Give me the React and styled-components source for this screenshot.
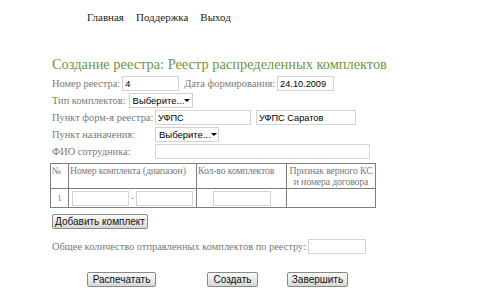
import React from 'react';
import styled, { createGlobalStyle } from 'styled-components';

const GlobalStyle = createGlobalStyle`
  html, body {
    margin: 0;
    padding: 0;
    background: #ffffff;
  }
  body {
    font-family: "Liberation Serif", "DejaVu Serif", serif;
  }
`;

const Page = styled.div`
  width: 500px;
  height: 302px;
  overflow: hidden;
  background: #fff;
`;

const Nav = styled.div`
  display: flex;
  gap: 12px;
  padding: 11px 0 0 87px;
  height: 20px;
  font-size: 11px;
  color: #222;
`;

const NavLink = styled.a`
  color: #222;
  text-decoration: none;
`;

const Content = styled.div`
  padding: 25px 0 0 52px;
`;

const Title = styled.h1`
  margin: 0 0 3px 0;
  font-weight: normal;
  font-size: 14.4px;
  line-height: 16px;
  color: #6b983c;
`;

const Row = styled.div`
  display: flex;
  align-items: center;
  height: 17px;
`;

const Label = styled.span`
  font-size: 10.4px;
  color: #7a7a7a;
  white-space: nowrap;
  width: ${(p) => (p.w ? `${p.w}px` : 'auto')};
  margin: ${(p) => p.m || '0'};
  flex-shrink: 0;
`;

const Input = styled.input`
  box-sizing: border-box;
  width: ${(p) => p.w}px;
  height: 15px;
  border: 1px solid #d4d4d4;
  padding: 0 2px;
  margin: ${(p) => p.m || '0'};
  font-family: "Liberation Sans", Arial, sans-serif;
  font-size: 9.2px;
  color: #000;
  background: #fff;
  outline: none;
`;

const Select = styled.div`
  box-sizing: border-box;
  display: inline-flex;
  align-items: center;
  justify-content: space-between;
  width: ${(p) => p.w}px;
  height: 15px;
  border: 1px solid #d0d0d0;
  padding: 0 5px 0 3px;
  font-family: "Liberation Sans", Arial, sans-serif;
  font-size: 9.5px;
  color: #000;
  background: #fff;
`;

const Arrow = styled.span`
  width: 0;
  height: 0;
  border-left: 3px solid transparent;
  border-right: 3px solid transparent;
  border-top: 3px solid #000;
`;

const Table = styled.table`
  border-collapse: collapse;
  table-layout: fixed;
  margin: 3px 0 0 -2px;
  width: 326px;
  font-size: 9.8px;
  letter-spacing: -0.15px;
  color: #7a7a7a;
`;

const Th = styled.th`
  font-weight: normal;
  border: 1px solid #7d7d7d;
  height: 23px;
  padding: 1px 1px 0;
  line-height: 11px;
  text-align: ${(p) => p.align || 'left'};
  vertical-align: top;
  white-space: nowrap;
  overflow: hidden;
`;

const Td = styled.td`
  border: 1px solid #7d7d7d;
  height: 18px;
  padding: 0;
  text-align: center;
  font-size: 9px;
`;

const CellInner = styled.div`
  display: flex;
  align-items: center;
  justify-content: center;
  gap: 2px;
  color: #777;
`;

const Button = styled.button`
  box-sizing: border-box;
  height: 15px;
  padding: 0;
  border: 1px solid #8a8a8a;
  border-radius: 2px;
  background: linear-gradient(#fafafa, #d8d8d8);
  font-family: "Liberation Sans", Arial, sans-serif;
  font-size: 10px;
  color: #111;
  width: ${(p) => p.w}px;
`;

const AddRow = styled.div`
  margin-top: 6px;
  height: 15px;
  display: flex;
  align-items: center;
`;

const TotalRow = styled.div`
  margin-top: 10px;
  display: flex;
  align-items: center;
  height: 15px;
  gap: 2px;
`;

const Actions = styled.div`
  display: flex;
  margin: 18px 0 0 35px;
`;

const Spacer = styled.div`
  width: ${(p) => p.w}px;
`;

export default function App() {
  return (
    <Page>
      <GlobalStyle />
      <Nav>
        <NavLink>Главная</NavLink>
        <NavLink>Поддержка</NavLink>
        <NavLink>Выход</NavLink>
      </Nav>
      <Content>
        <Title>Создание реестра: Реестр распределенных комплектов</Title>
        <Row>
          <Label m="0 2px 0 0">Номер реестра:</Label>
          <Input w={57} defaultValue="4" />
          <Label m="0 2px 0 5px">Дата формирования:</Label>
          <Input w={57} defaultValue="24.10.2009" />
        </Row>
        <Row>
          <Label m="0 3px 0 0">Тип комплектов:</Label>
          <Select w={64}>
            Выберите... <Arrow />
          </Select>
        </Row>
        <Row>
          <Label w={103}>Пункт форм-я реестра:</Label>
          <Input w={96} defaultValue="УФПС" />
          <Input w={100} m="0 0 0 5px" defaultValue="УФПС Саратов" />
        </Row>
        <Row>
          <Label w={103}>Пункт назначения:</Label>
          <Select w={64}>
            Выберите... <Arrow />
          </Select>
        </Row>
        <Row>
          <Label w={103}>ФИО сотрудника:</Label>
          <Input w={215} />
        </Row>
        <Table>
          <colgroup>
            <col style={{ width: 18 }} />
            <col style={{ width: 128 }} />
            <col style={{ width: 90 }} />
            <col />
          </colgroup>
          <thead>
            <tr>
              <Th>№</Th>
              <Th>Номер комплекта (диапазон)</Th>
              <Th>Кол-во комплектов</Th>
              <Th align="center">
                Признак верного КС
                <br />и номера договора
              </Th>
            </tr>
          </thead>
          <tbody>
            <tr>
              <Td>1</Td>
              <Td>
                <CellInner>
                  <Input w={57} />-<Input w={57} />
                </CellInner>
              </Td>
              <Td>
                <CellInner>
                  <Input w={58} />
                </CellInner>
              </Td>
              <Td />
            </tr>
          </tbody>
        </Table>
        <AddRow>
          <Button w={96}>Добавить комплект</Button>
        </AddRow>
        <TotalRow>
          <Label>Общее количество отправленных комплектов по реестру:</Label>
          <Input w={58} />
        </TotalRow>
        <Actions>
          <Button w={69}>Распечатать</Button>
          <Spacer w={51} />
          <Button w={51}>Создать</Button>
          <Spacer w={29} />
          <Button w={61}>Завершить</Button>
        </Actions>
      </Content>
    </Page>
  );
}
